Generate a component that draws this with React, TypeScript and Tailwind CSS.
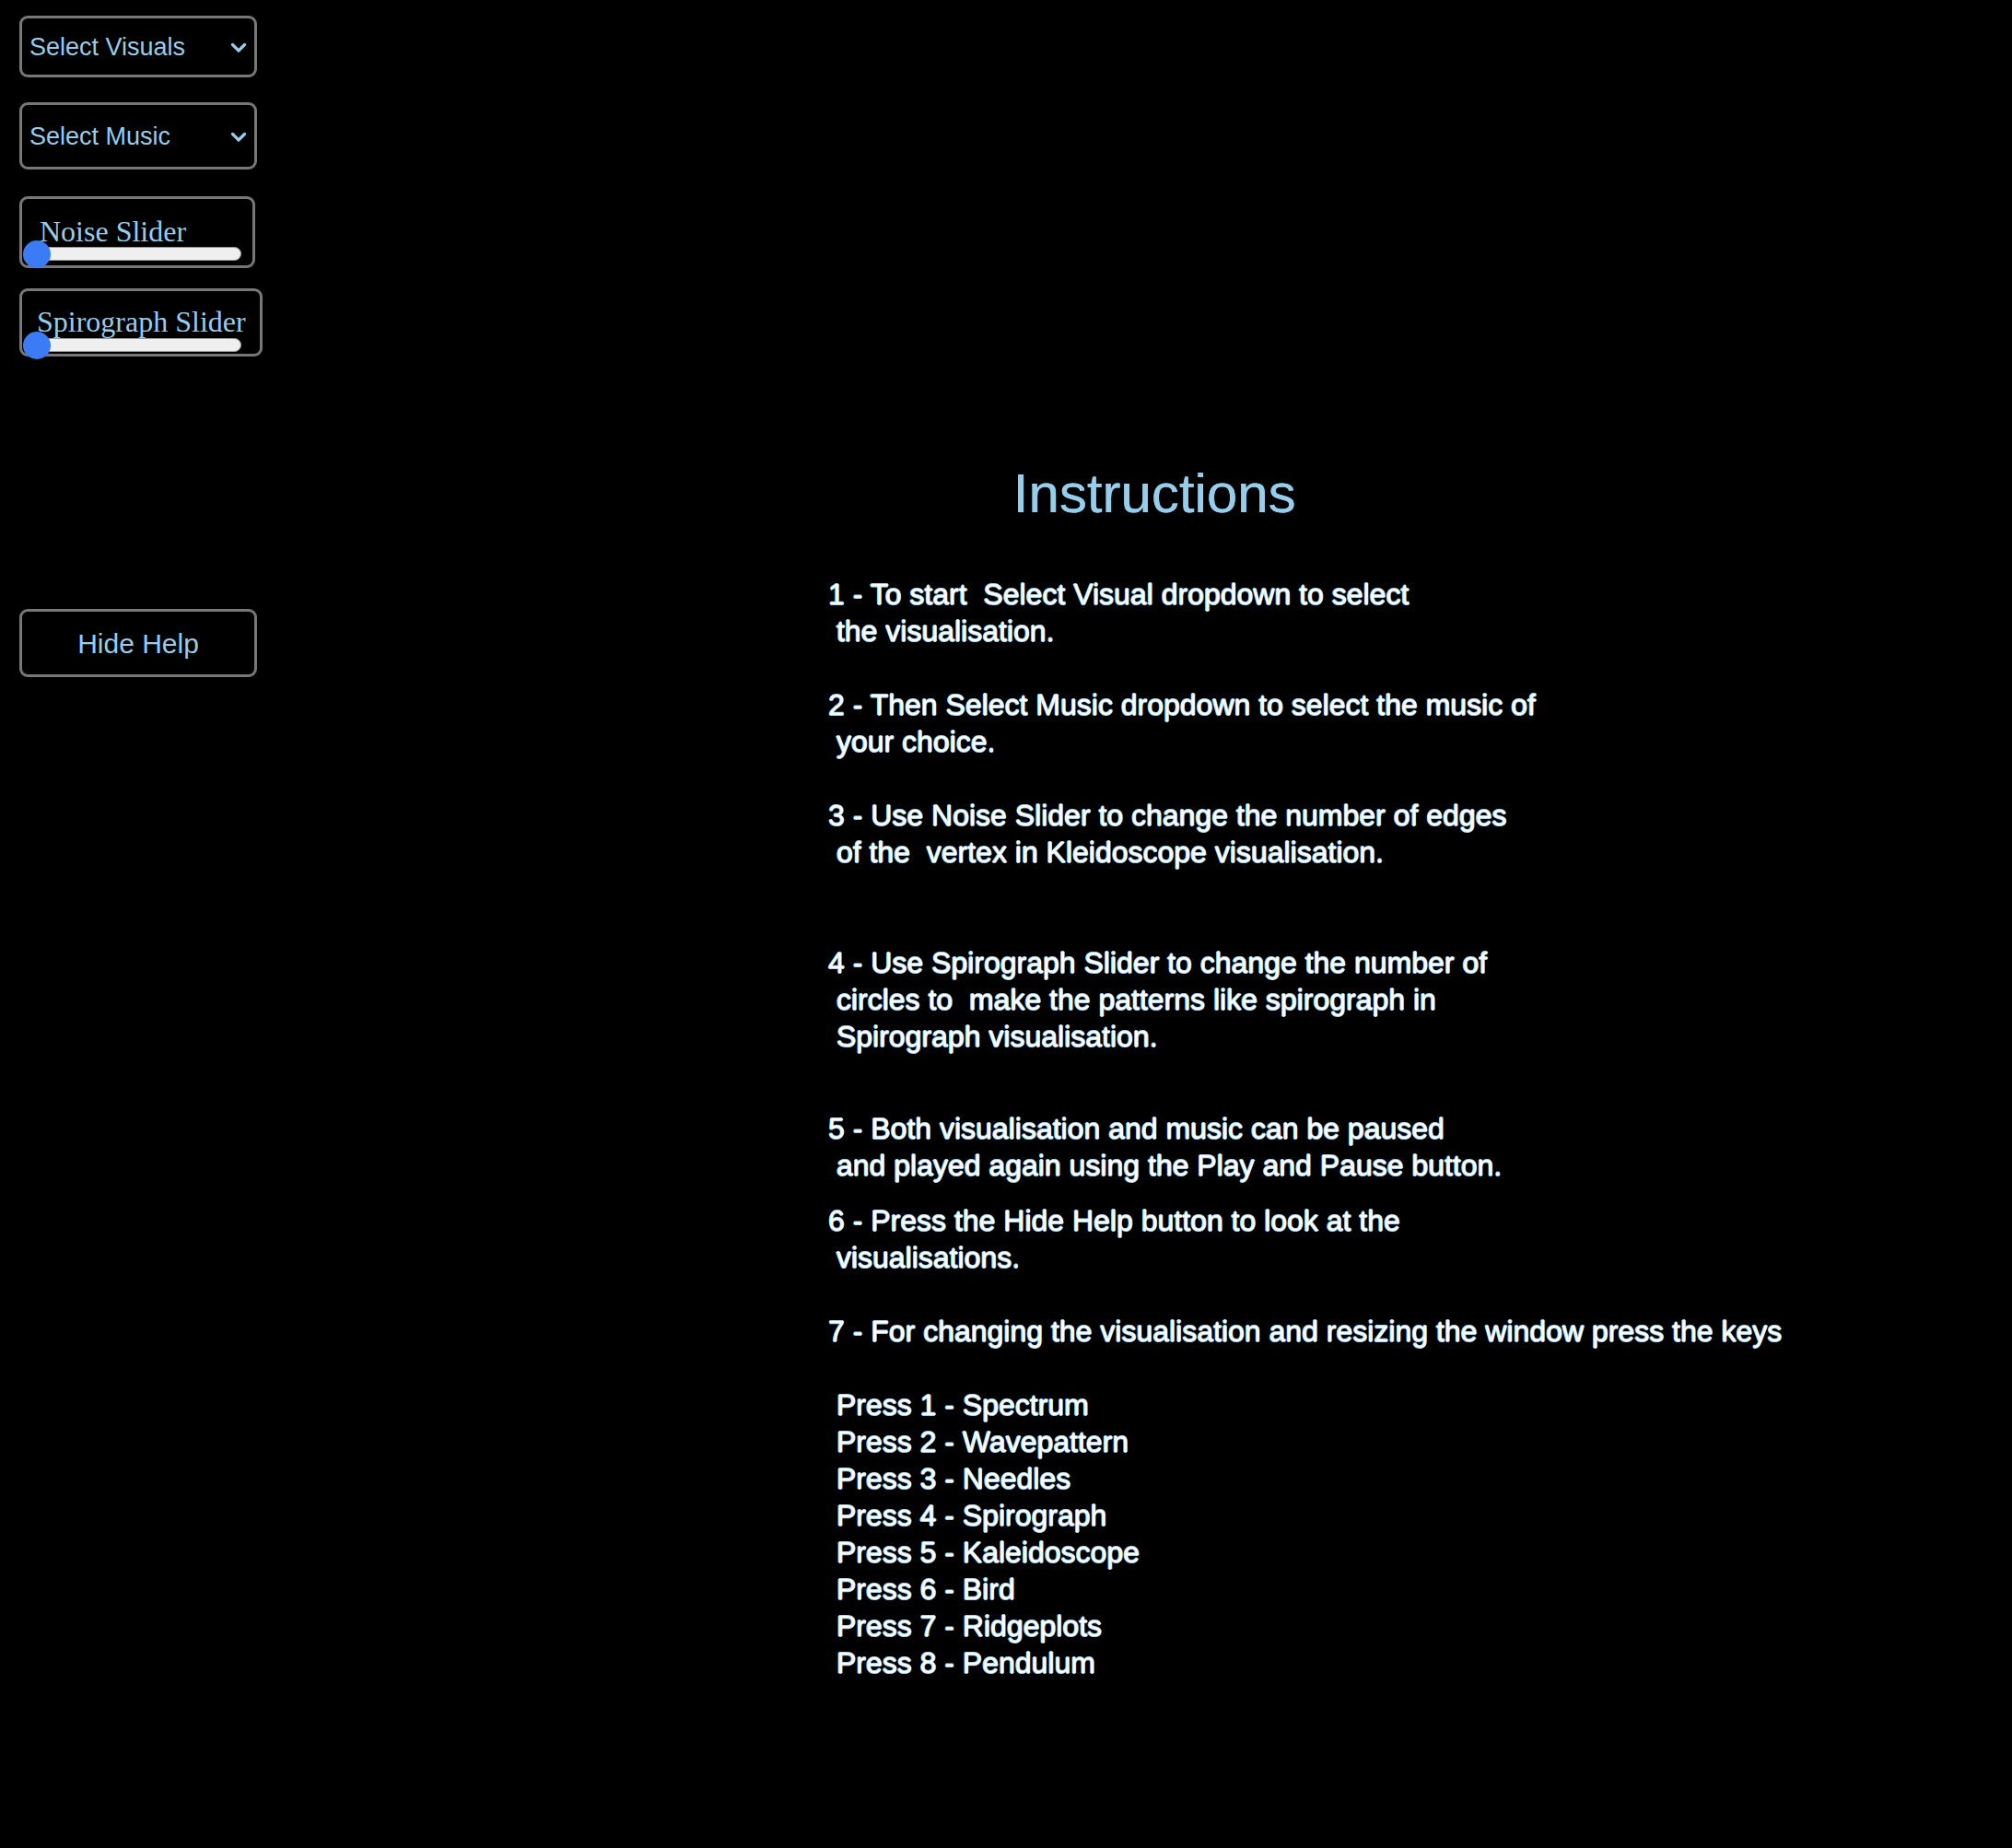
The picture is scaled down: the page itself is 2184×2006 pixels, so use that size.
import React from 'react';

const steps: { lines: string[]; gap: string }[] = [
  { lines: ['1 - To start  Select Visual dropdown to select', ' the visualisation.'], gap: 'mt-0' },
  { lines: ['2 - Then Select Music dropdown to select the music of', ' your choice.'], gap: 'mt-[40px]' },
  { lines: ['3 - Use Noise Slider to change the number of edges', ' of the  vertex in Kleidoscope visualisation.'], gap: 'mt-[40px]' },
  {
    lines: [
      '4 - Use Spirograph Slider to change the number of',
      ' circles to  make the patterns like spirograph in',
      ' Spirograph visualisation.',
    ],
    gap: 'mt-[80px]',
  },
  {
    lines: ['5 - Both visualisation and music can be paused', ' and played again using the Play and Pause button.'],
    gap: 'mt-[60px]',
  },
  { lines: ['6 - Press the Hide Help button to look at the', ' visualisations.'], gap: 'mt-[20px]' },
  { lines: ['7 - For changing the visualisation and resizing the window press the keys'], gap: 'mt-[40px]' },
  {
    lines: [
      ' Press 1 - Spectrum',
      ' Press 2 - Wavepattern',
      ' Press 3 - Needles',
      ' Press 4 - Spirograph',
      ' Press 5 - Kaleidoscope',
      ' Press 6 - Bird',
      ' Press 7 - Ridgeplots',
      ' Press 8 - Pendulum',
    ],
    gap: 'mt-[40px]',
  },
];

const Chevron = () => (
  <svg width="18" height="12" viewBox="0 0 18 12" fill="none" className="shrink-0">
    <path d="M2.5 2.5L9 9l6.5-6.5" stroke="#96cdeb" strokeWidth="3.2" strokeLinecap="round" strokeLinejoin="round" />
  </svg>
);

const Dropdown = ({ label, height }: { label: string; height: string }) => (
  <div
    className={`${height} w-[258px] flex items-center justify-between pl-[8px] pr-[8px] pt-[2px] border-[3px] border-[#777777] rounded-[9px] text-[27px] text-[#96cdeb] font-['Liberation_Sans',Arial,sans-serif]`}
  >
    <span>{label}</span>
    <Chevron />
  </div>
);

const Slider = () => (
  <div className="relative ml-[3px] w-[235px] h-[15px] rounded-full bg-[#efefef] border border-[#9a9a9a]">
    <div className="absolute left-[-3px] top-[-8px] w-[30px] h-[30px] rounded-full bg-[#3b7cf6]" />
  </div>
);

const App = () => {
  return (
    <div className="min-h-screen w-full bg-black flex">
      <aside className="w-[899px] shrink-0 pl-[21px] pt-[17px] flex flex-col">
        <Dropdown label="Select Visuals" height="h-[67px]" />
        <div className="mt-[27px]">
          <Dropdown label="Select Music" height="h-[73px]" />
        </div>

        <div className="mt-[29px] w-[256px] border-[3px] border-[#777777] rounded-[9px] pt-[19px] pb-[5px]">
          <div className="ml-[19px] h-[32px] leading-[32px] text-[32px] text-[#96cdeb] font-['Liberation_Serif','Times_New_Roman',serif]">
            Noise Slider
          </div>
          <div className="mt-[1px]">
            <Slider />
          </div>
        </div>

        <div className="mt-[22px] w-[264px] border-[3px] border-[#777777] rounded-[9px] pt-[17px] pb-[2px]">
          <div className="ml-[16px] h-[32px] leading-[32px] text-[32px] text-[#96cdeb] whitespace-nowrap font-['Liberation_Serif','Times_New_Roman',serif]">
            Spirograph Slider
          </div>
          <div className="mt-[2px]">
            <Slider />
          </div>
        </div>

        <button
          type="button"
          className="mt-[274px] w-[258px] h-[74px] border-[3px] border-[#777777] rounded-[9px] bg-black text-[30px] text-[#96cdeb] font-['Liberation_Sans',Arial,sans-serif]"
        >
          Hide Help
        </button>
      </aside>

      <main className="pt-[506px] pb-[80px] font-['Liberation_Sans',Arial,sans-serif]">
        <h1 className="w-[708px] text-center text-[60px] leading-none text-[#96cdeb] [text-shadow:0.4px_0_0_#96cdeb]">
          Instructions
        </h1>
        <div className="mt-[59px] text-[32px] leading-[40px] text-white whitespace-pre [text-shadow:0.8px_0_0_#a6d5f0,-0.8px_0_0_#a6d5f0,0_0.8px_0_#a6d5f0,0_-0.8px_0_#a6d5f0]">
          {steps.map((step, i) => (
            <div key={i} className={step.gap}>
              {step.lines.map((line, j) => (
                <div key={j} className="h-[40px]">
                  {line}
                </div>
              ))}
            </div>
          ))}
        </div>
      </main>
    </div>
  );
};

export default App;
